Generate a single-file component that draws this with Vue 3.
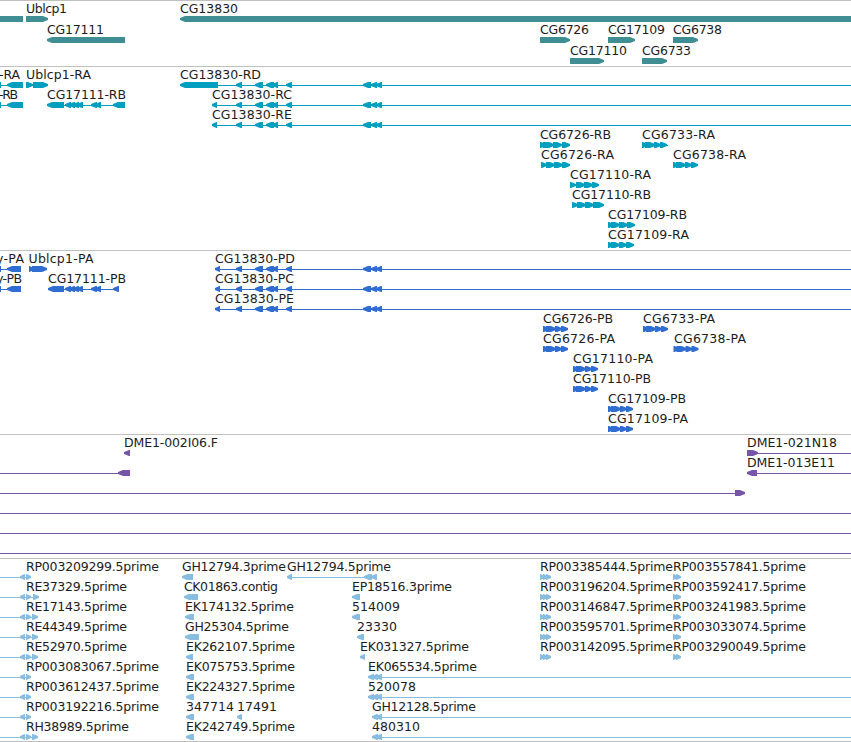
<template>
  <div class="browser">
    <section v-for="track in tracks" :key="track.name" class="track" :class="track.name">
      <svg width="851" :height="track.height - 1" class="canvas">
        <g v-for="(f, i) in track.features" :key="i" :transform="`translate(0 ${f.row * track.pitch})`">
          <rect v-if="f.line" class="line" :x="f.line[0]" y="18" :width="f.line[1] - f.line[0]" height="1" />
          <path v-for="(e, n) in f.exons" :key="n" class="exon" :d="exonPath(e, f.dir)" />
          <text v-if="f.label" :x="f.x" y="12" :textLength="f.w">{{ f.label }}</text>
        </g>
      </svg>
    </section>
  </div>
</template>

<script setup>
// row, label, label x, label width, direction, exons [start, end], intron line
const feat = (row, label, x, w, dir, exons, line) => ({ row, label, x, w, dir, exons, line })

// blunt arrow head, two pixels high at the tip
const exonPath = ([a, b, flip], dir) => {
  const d = flip || dir
  const head = Math.min(5, b - a - 0.5)
  if (d === "L") return `M${a} 17V19L${a + head} 21H${b}V15H${a + head}Z`
  if (d === "R") return `M${b} 17V19L${b - head} 21H${a}V15H${b - head}Z`
  return `M${a} 15H${b}V21H${a}Z`
}

const shift = (x, list) => list.map(([a, b]) => [x + a, x + b])

const ladder = [[65, 71], [69, 75], [73, 79], [77, 83], [91, 97], [95, 101]]
const tail = [[236, 242], [255, 263], [266, 274], [272, 278], [286, 292], [363, 371], [371, 377], [376, 382]]
const trio = [[0, 6], [3, 13], [12, 19], [18, 25]]

const genes = [
  feat(0, "", 0, 0, "", [[0, 23]]),
  feat(0, "Ublcp1", 26, 41, "R", [[26, 48]]),
  feat(1, "CG17111", 47, 57, "L", [[47, 125]]),
  feat(0, "CG13830", 180, 58, "L", [[180, 851]]),
  feat(1, "CG6726", 540, 49, "R", [[540, 570]]),
  feat(2, "CG17110", 570, 57, "R", [[570, 604]]),
  feat(1, "CG17109", 608, 57, "R", [[608, 635]]),
  feat(2, "CG6733", 642, 49, "R", [[642, 667]]),
  feat(1, "CG6738", 673, 49, "R", [[673, 698]])
]

const transcripts = [
  feat(0, "-RA", -1, 21, "L", [[-5, 1], [7, 23]], [0, 23]),
  feat(1, "-RB", -1, 19, "L", [[-5, 1], [7, 23]], [0, 23]),
  feat(0, "Ublcp1-RA", 26, 65, "R", [[26, 33], [33, 48]], [26, 48]),
  feat(1, "CG17111-RB", 47, 79, "L", [[47, 64], ...ladder, [113, 125]], [47, 125]),
  feat(0, "CG13830-RD", 180, 81, "L", [[180, 218], ...tail], [180, 851]),
  feat(1, "CG13830-RC", 212, 80, "L", [[212, 217], ...tail], [212, 851]),
  feat(2, "CG13830-RE", 212, 80, "L", [[212, 217], ...tail], [212, 851]),
  feat(3, "CG6726-RB", 540, 71, "R", [[540, 546], [543, 554], [553, 562], [562, 570]], [540, 570]),
  feat(4, "CG6726-RA", 541, 73, "R", [[541, 547], [546, 555], [554, 563], [562, 570]], [541, 570]),
  feat(3, "CG6733-RA", 642, 73, "R", shift(642, trio), [642, 668]),
  feat(4, "CG6738-RA", 673, 73, "R", shift(673, trio), [673, 698]),
  feat(5, "CG17110-RA", 570, 81, "R", [[570, 576], [576, 585], [584, 593], [592, 599]], [570, 599]),
  feat(6, "CG17110-RB", 572, 79, "R", [[572, 578], [577, 586], [585, 594], [593, 604]], [572, 604]),
  feat(7, "CG17109-RB", 608, 79, "R", [[608, 614], [611, 620], [619, 628], [627, 635]], [608, 635]),
  feat(8, "CG17109-RA", 608, 81, "R", [[608, 614], [611, 620], [619, 627], [626, 634]], [608, 634])
]

const proteins = [
  feat(0, "y-PA", -4, 28, "L", [[-5, 1], [7, 21]], [0, 21]),
  feat(1, "y-PB", -4, 26, "L", [[-5, 1], [7, 21]], [0, 21]),
  feat(0, "Ublcp1-PA", 28.5, 65, "R", [[29, 34], [32, 47]], [29, 47]),
  feat(1, "CG17111-PB", 48, 78, "L", [[48, 64], ...ladder, [113, 119]], [48, 119]),
  feat(0, "CG13830-PD", 215, 80, "L", [[215, 220], ...tail], [215, 851]),
  feat(1, "CG13830-PC", 215, 79, "L", [[215, 220], ...tail], [215, 851]),
  feat(2, "CG13830-PE", 215, 79, "L", [[215, 220], ...tail], [215, 851]),
  feat(3, "CG6726-PB", 543, 70, "R", shift(543, trio), [543, 568]),
  feat(4, "CG6726-PA", 543, 72, "R", shift(543, trio), [543, 568]),
  feat(3, "CG6733-PA", 643, 72, "R", shift(643, trio), [643, 668]),
  feat(4, "CG6738-PA", 674, 72, "R", shift(673.5, trio), [674, 698]),
  feat(5, "CG17110-PA", 573, 80, "R", shift(573, trio), [573, 598]),
  feat(6, "CG17110-PB", 573, 78, "R", shift(573, trio), [573, 598]),
  feat(7, "CG17109-PB", 608, 78, "R", shift(608, trio), [608, 633]),
  feat(8, "CG17109-PA", 608, 80, "R", shift(608, trio), [608, 633])
]

const clones = [
  feat(0, "DME1-002I06.F", 124, 94, "L", [[124, 130]]),
  feat(0, "DME1-021N18", 747, 90, "R", [[747, 758]], [747, 851]),
  feat(1, "", 0, 0, "L", [[118, 130]], [0, 130]),
  feat(1, "DME1-013E11", 747, 88, "L", [[747, 757]], [747, 851]),
  feat(2, "", 0, 0, "R", [[735, 745]], [0, 745]),
  ...[3, 4, 5].map((row) => feat(row, "", 0, 0, "", [], [0, 851]))
]

// leftmost EST column, end of the second right-hand exon where there is one
const leftEsts = [
  ["RP003209299.5prime", 133],
  ["RE37329.5prime", 101, 39],
  ["RE17143.5prime", 101, 38],
  ["RE44349.5prime", 101, 38],
  ["RE52970.5prime", 101, 38],
  ["RP003083067.5prime", 133],
  ["RP003612437.5prime", 133],
  ["RP003192216.5prime", 133],
  ["RH38989.5prime", 103, 38]
].map(([label, w, end], row) => {
  const exons = [[20, 25, "L"], [26, 31]]
  if (end) exons.push([end - 6, end])
  return feat(row, label, 26, w, "R", exons, [0, end || 31])
})

const rightEsts = [
  ["RP003385444.5prime", "RP003557841.5prime"],
  ["RP003196204.5prime", "RP003592417.5prime"],
  ["RP003146847.5prime", "RP003241983.5prime"],
  ["RP003595701.5prime", "RP003033074.5prime"],
  ["RP003142095.5prime", "RP003290049.5prime"]
].flatMap(([a, b], row) => [
  feat(row, a, 540, 133, "R", [[540, 545], [543, 548], [546, 551]]),
  feat(row, b, 673, 133, "R", [[673, 678], [676, 681]])
])

const ests = [
  ...leftEsts,
  feat(0, "GH12794.3prime", 182, 104, "L", [[182, 193]]),
  feat(1, "CK01863.contig", 184, 94, "L", [[184, 191], [187, 198]]),
  feat(2, "EK174132.5prime", 185, 109, "L", [[185, 194]]),
  feat(3, "GH25304.5prime", 185, 104, "L", [[185, 199]]),
  feat(4, "EK262107.5prime", 186, 109, "L", [[186, 193]]),
  feat(5, "EK075753.5prime", 186, 109, "L", [[186, 194]]),
  feat(6, "EK224327.5prime", 186, 109, "L", [[186, 194]]),
  feat(7, "347714", 186, 48, "L", [[186, 194]]),
  feat(7, "17491", 237, 40, "L", [[237, 242]]),
  feat(8, "EK242749.5prime", 186, 109, "L", [[186, 194]]),
  feat(0, "GH12794.5prime", 287, 104, "L", [[287, 292], [364, 372], [371, 377]], [287, 377]),
  feat(1, "EP18516.3prime", 352, 100, "L", [[352, 360]]),
  feat(2, "514009", 352, 48, "L", [[352, 360]]),
  feat(3, "23330", 357, 40, "L", [[357, 364]]),
  feat(4, "EK031327.5prime", 360, 109, "L", [[360, 365]]),
  feat(5, "EK065534.5prime", 368, 109, "L", [[368, 374], [372, 378], [376, 382]], [368, 851]),
  feat(6, "520078", 368, 48, "L", [[368, 374], [372, 378], [376, 382]], [368, 851]),
  feat(7, "GH12128.5prime", 372, 104, "L", [[372, 378], [376, 382]], [372, 851]),
  feat(8, "480310", 372, 48, "L", [[372, 378], [376, 382]], [372, 851]),
  ...rightEsts
]

const tracks = [
  { name: "genes", height: 66, pitch: 21, features: genes },
  { name: "transcripts", height: 184, pitch: 20, features: transcripts },
  { name: "proteins", height: 184, pitch: 20, features: proteins },
  { name: "clones", height: 124, pitch: 20, features: clones },
  { name: "ests", height: 183, pitch: 20, features: ests }
]
</script>

<style>
body {
  margin: 0;
  background: #fff;
}
</style>

<style scoped>
.browser {
  width: 851px;
  border-bottom: 1px solid #c0c0c0;
  overflow: hidden;
}

.track {
  border-top: 1px solid #c0c0c0;
}

.canvas {
  display: block;
}

.line {
  fill: currentColor;
  shape-rendering: crispEdges;
}

.exon {
  fill: currentColor;
}

text {
  fill: #1c1c1c;
  font-family: "DejaVu Sans", sans-serif;
  font-size: 12.5px;
}

.genes {
  color: #3f8e94;
}

.transcripts {
  color: #009fc0;
}

.proteins {
  color: #306dd0;
}

.clones {
  color: #7755a9;
}

.ests {
  color: #88bddf;
}
</style>
